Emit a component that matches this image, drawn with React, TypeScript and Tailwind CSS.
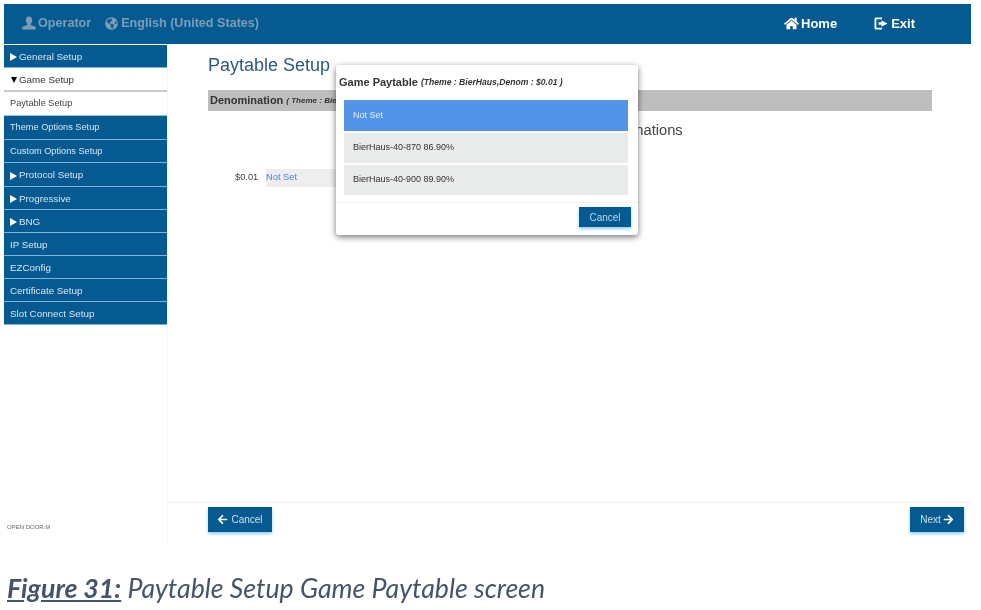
import React from "react";
import { FaHome, FaGlobeAmericas, FaArrowLeft, FaArrowRight } from "react-icons/fa";

const UserIcon = () => (
  <svg width="14" height="14" viewBox="0 0 14 14" fill="currentColor">
    <path d="M7 0.500c2 0 3.200 1.500 3.200 3.600 0 1.600-.7 3-1.600 3.700v1.100l4 1.600c.8.300 1.200.8 1.200 1.500v1.500H.2V12c0-.7.400-1.200 1.200-1.500l4-1.600V7.800c-.9-.7-1.600-2.100-1.600-3.700C3.800 2 5 .5 7 .5z" />
  </svg>
);

const ExitIcon = () => (
  <svg width="14" height="13" viewBox="0 0 14 13" fill="currentColor">
    <path d="M2.500 0.500H8v1.800H3c-.4 0-.7.3-.7.7v7c0 .4.300.7.700.7h5v1.800H2.500C1.100 12.500.500 11.900.500 10.500v-8C.500 1.100 1.100.500 2.500.500z" />
    <path d="M7.500 3.200l6 3.300-6 3.300V7.800H4.500V5.200h3z" />
  </svg>
);

const Arrow = () => (
  <span className="inline-block h-0 w-0 border-y-[4px] border-l-[7px] border-y-transparent border-l-white" />
);

type Item = { label: string; arrow?: boolean; h: string; small?: boolean };
const upper: Item[] = [{ label: "General Setup", arrow: true, h: "h-[23px]" }];
const lower: Item[] = [
  { label: "Theme Options Setup", h: "h-[24px]", small: true },
  { label: "Custom Options Setup", h: "h-[23px]", small: true },
  { label: "Protocol Setup", arrow: true, h: "h-[24px]" },
  { label: "Progressive", arrow: true, h: "h-[23px]" },
  { label: "BNG", arrow: true, h: "h-[23px]" },
  { label: "IP Setup", h: "h-[23px]" },
  { label: "EZConfig", h: "h-[23px]" },
  { label: "Certificate Setup", h: "h-[23px]" },
  { label: "Slot Connect Setup", h: "h-[23px]" },
];

const BlueItem = ({ item }: { item: Item }) => (
  <div
    className={`flex items-center gap-[2px] border-b border-[#7db3d8] bg-[#065a92] pl-[6px] text-[#d9e6ef] ${item.small ? "pt-px text-[9.2px]" : "pt-[2px] text-[9.8px]"} ${item.h}`}
  >
    {item.arrow && <Arrow />}
    {item.label}
  </div>
);

export default function App() {
  return (
    <div className="relative h-[610px] w-[981px] overflow-hidden bg-white pl-1 pt-1 font-['Liberation_Sans',Arial,sans-serif] blur-[0.5px]">
      <div className="flex h-[540px] w-[967px] flex-col">
        <header className="flex h-10 shrink-0 items-center bg-[#065a92] pb-px pl-[18px] text-[12.6px] font-bold">
          <div className="flex items-center gap-[2px] text-[#7d9db5]">
            <UserIcon />
            <span>Operator</span>
          </div>
          <div className="ml-[14px] flex items-center gap-[3px] text-[#7d9db5]">
            <FaGlobeAmericas size={13} />
            <span>English (United States)</span>
          </div>
          <div className="ml-auto flex items-center gap-[2px] text-[13px] text-white">
            <FaHome size={15} />
            <span>Home</span>
          </div>
          <div className="ml-[37px] mr-[56px] flex items-center gap-[3px] text-[13px] text-white">
            <ExitIcon />
            <span>Exit</span>
          </div>
        </header>

        <div className="flex min-h-0 flex-1">
          <aside className="flex w-[163px] shrink-0 flex-col pt-px">
            {upper.map((i) => (
              <BlueItem key={i.label} item={i} />
            ))}
            <div className="flex h-[24px] items-center gap-[2px] border-b-2 border-[#c9c9c9] bg-white pl-[7px] pt-[2px] text-[9.8px] text-[#333]">
              <span className="inline-block h-0 w-0 border-x-[3.5px] border-t-[6px] border-x-transparent border-t-black" />
              Game Setup
            </div>
            <div className="flex h-[24px] items-center border-b border-[#9cc3de] bg-white pl-[6px] text-[9.2px] text-[#444]">
              Paytable Setup
            </div>
            {lower.map((i) => (
              <BlueItem key={i.label} item={i} />
            ))}
            <div className="mt-auto pb-[12px] pl-[3px] text-[6px] text-[#666]">OPEN DOOR:M</div>
          </aside>

          <main className="flex min-w-0 flex-1 flex-col border-l border-[#f4f4f4]">
            <div className="flex-1 pl-[40px] pr-[39px] pt-[11px]">
              <h1 className="text-[18px] leading-[21px] text-[#2a5a7d]">Paytable Setup</h1>
              <div className="mt-[14px] flex h-[21px] items-center bg-[#bebebe] pl-[2px] text-[11px] font-bold text-[#333]">
                Denomination
                <span className="ml-[3px] text-[8px] italic">( Theme : BierHaus )</span>
              </div>
              <p className="mt-[10px] text-center text-[14.7px] leading-[18px] text-[#444]">
                Select Paytable for Denominations
              </p>
              <div className="ml-[27px] mt-[30px] flex h-[18px] items-center text-[9.3px] text-[#444]">
                <span className="w-[31px]">$0.01</span>
                <span className="flex h-[18px] w-[100px] items-center bg-[#eeeeee] text-[#4a86d8]">Not Set</span>
              </div>
            </div>
            <footer className="flex h-[42px] shrink-0 items-start justify-between border-t border-[#eeeeee] pl-[40px] pr-[7px] pt-1">
              <button className="flex h-[25px] w-[64px] items-center justify-center gap-[3px] bg-[#065a92] text-[10px] text-[#cfe0ec] shadow-[0_2px_3px_#8fd0f0]">
                <FaArrowLeft size={11} className="text-white" />
                Cancel
              </button>
              <button className="flex h-[25px] w-[54px] items-center justify-center gap-[2px] bg-[#065a92] text-[10px] text-[#cfe0ec] shadow-[0_2px_3px_#8fd0f0]">
                Next
                <FaArrowRight size={11} className="text-white" />
              </button>
            </footer>
          </main>
        </div>
      </div>

      <p className="mt-[29px] pl-[3px] font-['Lato',sans-serif] text-[26.7px] leading-[30px] italic text-[#44546a]">
        <span className="font-bold underline">Figure 31:</span> Paytable Setup Game Paytable screen
      </p>

      <div className="absolute left-[336px] top-[65px] h-[170px] w-[302px] rounded-[3px] bg-white shadow-[0_2px_6px_rgba(0,0,0,0.55)]">
        <div className="flex h-[35px] items-center pl-[3px] text-[11px] font-bold text-[#333]">
          Game Paytable
          <span className="ml-[3px] text-[8.6px] italic">(Theme : BierHaus,Denom : $0.01 )</span>
        </div>
        <div className="ml-[8px] mr-[10px] flex flex-col gap-[2px]">
          <div className="flex h-[31px] items-center bg-[#5393e8] pl-[9px] text-[9px] text-[#e3edfa]">Not Set</div>
          <div className="flex h-[30px] items-center bg-[#e9ebea] pl-[9px] text-[9px] text-[#333]">BierHaus-40-870 86.90%</div>
          <div className="flex h-[30px] items-center bg-[#e9ebea] pl-[9px] text-[9px] text-[#333]">BierHaus-40-900 89.90%</div>
        </div>
        <div className="mt-[7px] flex justify-end border-t border-[#f2f2f2] pr-[7px] pt-[4px]">
          <button className="flex h-[20px] w-[52px] items-center justify-center bg-[#065a92] text-[10px] text-[#bcd6e8] shadow-[0_2px_3px_#8fd0f0]">
            Cancel
          </button>
        </div>
      </div>
    </div>
  );
}
